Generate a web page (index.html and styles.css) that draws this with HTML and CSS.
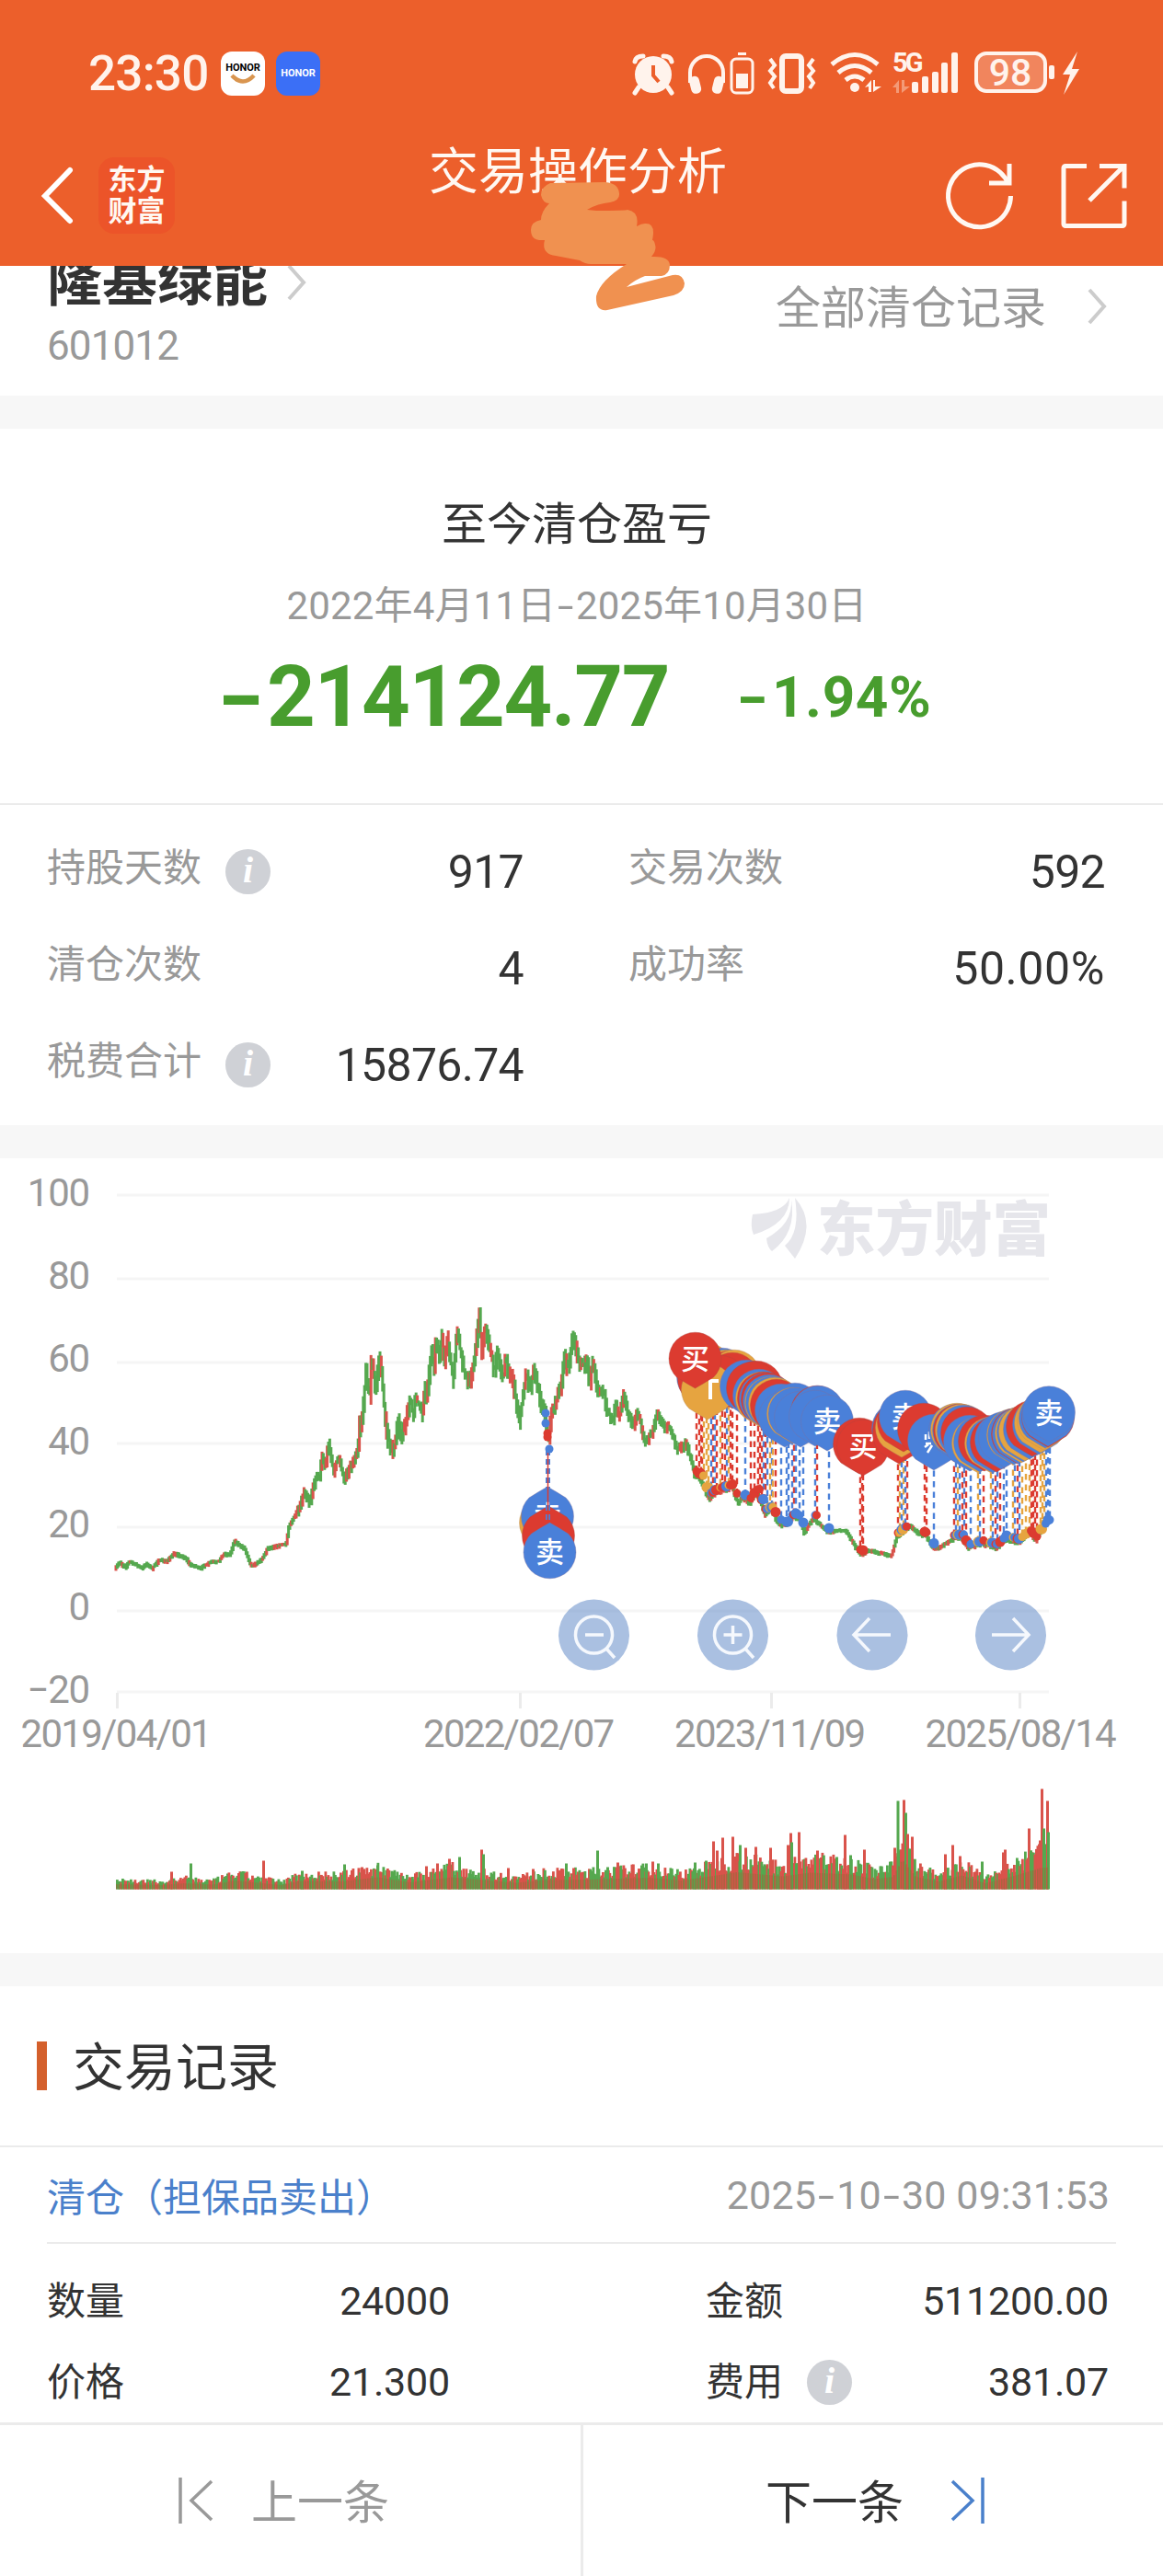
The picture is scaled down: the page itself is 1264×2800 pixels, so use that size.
FILE: index.html
```html
<!DOCTYPE html>
<html lang="zh-CN">
<head>
    <meta charset="UTF-8">
    <meta name="viewport" content="width=device-width, initial-scale=1.0">
    <title>交易操作分析</title>
    <link rel="stylesheet" href="styles.css">
</head>
<body>

<header class="header">
    <div class="status-bar">
        <span class="time">23:30</span>
        <span class="app-badge white">HONOR
            <svg width="28" height="12" viewBox="0 0 28 12"><path d="M2 2Q14 15 26 2" fill="none" stroke="#d9954f" stroke-width="4.5"/></svg>
        </span>
        <span class="app-badge blue">HONOR</span>

        <svg class="status-icons" width="500" height="60" viewBox="680 50 500 60">
            <g fill="#fff3ec" stroke="none">
                <!-- alarm -->
                <circle cx="710" cy="81" r="20"/>
                <path d="M694 95l-4 6M726 95l4 6" stroke="#fff3ec" stroke-width="5" stroke-linecap="round"/>
                <path d="M690 67Q691 61 699 61M730 67Q729 61 721 61" fill="none" stroke="#fff3ec" stroke-width="5" stroke-linecap="round"/>
                <path d="M710 71v11l6 7" fill="none" stroke="#ec5f2b" stroke-width="4"/>
                <!-- headphones -->
                <path d="M750 90V79a18 18 0 0 1 36 0v11" fill="none" stroke="#fff3ec" stroke-width="4"/>
                <rect x="750" y="83" width="11" height="19" rx="5" transform="rotate(-14 755 92)"/>
                <rect x="775" y="83" width="11" height="19" rx="5" transform="rotate(14 781 92)"/>
                <rect x="802" y="57" width="9" height="3"/>
                <rect x="795" y="64" width="23" height="37" rx="5" fill="none" stroke="#fff3ec" stroke-width="3"/>
                <rect x="800" y="80" width="13" height="16"/>
                <!-- vibrate -->
                <rect x="850" y="61" width="21" height="38" rx="4" fill="none" stroke="#fff3ec" stroke-width="6"/>
                <path d="M837 64l5 7-5 6 5 6-5 7 4 6M884 64l-5 7 5 6-5 6 5 7-4 6" fill="none" stroke="#fff3ec" stroke-width="4"/>
                <!-- wifi -->
                <path d="M904 70Q929 49 954 70M911 79Q929 64 947 79M919 87Q929 79 939 87" fill="none" stroke="#fff3ec" stroke-width="5"/>
                <circle cx="929" cy="95" r="5"/>
                <path d="M940 95l7-8v13h-3v-6zM949 100V87h2v7h7z"/>
                <!-- mobile signal -->
                <path d="M970 95l7-8v14h-3v-6zM980 101V87h3v7h6z" opacity=".4"/>
                <rect x="991" y="89" width="7" height="12" rx="2"/>
                <rect x="1002" y="83" width="7" height="18" rx="2"/>
                <rect x="1013" y="78" width="7" height="23" rx="2"/>
                <rect x="1023" y="68" width="7" height="33" rx="2"/>
                <rect x="1034" y="57" width="7" height="44" rx="2"/>
                <!-- battery -->
                <rect x="1061" y="58" width="75" height="41" rx="11" fill="#f1855d" stroke="#fff3ec" stroke-width="4"/>
                <rect x="1140" y="71" width="6" height="15" rx="2"/>
                <path d="M1171 56l-16 25h8l-7 22 17-28h-8z"/>
                <text class="net" x="970" y="78">5G</text>
                <text class="charge" x="1098" y="93" text-anchor="middle">98</text>
            </g>
        </svg>
    </div>

    <div class="nav">
        <svg class="back" width="36" height="64" viewBox="0 0 36 64"><path d="M32 4L5 32l27 27" fill="none" stroke="#fff" stroke-width="6" stroke-linecap="round"/></svg>
        <div class="brand"><span>东方</span><span>财富</span></div>
        <h1>交易操作分析</h1>
        <svg class="tools" width="200" height="80" viewBox="1026 172 200 80" fill="none" stroke="#fff8f2" stroke-width="5">
            <path d="M1098.500 212A34 34 0 1 1 1096 199"/>
            <path d="M1075 198h22v-21"/>
            <path d="M1181 179.500h-23a2 2 0 0 0-2 2v61a2 2 0 0 0 2 2h62a2 2 0 0 0 2-2v-25M1195 179.500h27v24M1221 180l-37 37"/>
        </svg>
    </div>

    <!-- doodle over the title -->
    <svg class="doodle" width="180" height="150" viewBox="570 195 180 150">
        <path fill="#f09150" d="M598 199Q588 203 588 212Q590 221 597 221Q588 230 588 239Q577 241 577 250Q577 260 586 261H592Q588 276 604 278L630 283Q636 287 642 287H681Q652 305 648 322Q647 339 660 337L732 321Q744 317 744 308Q742 297 731 299L681 312Q690 304 701 300H719Q728 298 728 288Q727 278 708 279Q714 272 712 266Q711 261 709 261Q713 242 701 243Q697 243 692 246Q695 230 682 228Q680 229 648 229L638 228Q650 221 663 220Q674 218 673 210Q672 199 658 198Z"/>
    </svg>
</header>

<section class="stock">
    <div class="stock-info">
        <div class="stock-name">隆基绿能 <svg width="22" height="40" viewBox="0 0 22 40"><path d="M2 2l16 18L2 38" fill="none" stroke="#ccc" stroke-width="4"/></svg></div>
        <div class="stock-code">601012</div>
    </div>
    <div class="all-records"><span>全部清仓记录</span>
        <svg width="22" height="40" viewBox="0 0 22 40"><path d="M2 2l16 18L2 38" fill="none" stroke="#ccc" stroke-width="4"/></svg>
    </div>
</section>

<section class="summary">
    <h2>至今清仓盈亏</h2>
    <p class="period">2022年4月11日<i class="dash">-</i>2025年10月30日</p>
    <div class="profit">
        <span class="amount"><i class="dash">-</i>214124.77</span>
        <span class="percent"><i class="dash">-</i>1.94%</span>
    </div>
    <div class="stats">
        <div class="stat"><span>持股天数</span><i class="info">i</i><b>917</b></div>
        <div class="stat"><span>交易次数</span><b>592</b></div>
        <div class="stat"><span>清仓次数</span><b>4</b></div>
        <div class="stat"><span>成功率</span><b class="rate">50.00%</b></div>
        <div class="stat"><span>税费合计</span><i class="info">i</i><b>15876.74</b></div>
    </div>
</section>

<section class="chart">
    <svg id="chart" width="1264" height="864" viewBox="0 1259 1264 864">
        <g id="grid"></g>
        <g class="watermark">
            <path d="M858 1302Q852 1318 818 1320Q815 1333 819 1342Q858 1330 858 1302Z"/>
            <path d="M860 1304Q862 1330 833 1346Q834 1356 839 1360Q866 1340 860 1304Z"/>
            <path d="M864 1302Q870 1340 853 1354L864 1368Q889 1330 864 1302Z"/>
            <text x="888" y="1359">东方财富</text>
        </g>
        <g id="price"></g>
        <g id="stems"></g>
        <g id="pins"></g>
        <g id="volume"></g>
        <g class="chart-btn">
            <circle cx="645.500" cy="1777" r="38.500"/><circle cx="796.500" cy="1777" r="38.500"/>
            <circle cx="948" cy="1777" r="38.500"/><circle cx="1098.500" cy="1777" r="38.500"/>
            <g fill="none" stroke="#f5f8fd" stroke-width="3.500">
                <circle cx="645.500" cy="1777" r="20"/><path d="M636 1777h20M659 1792l9 10"/>
                <circle cx="796.500" cy="1777" r="20"/><path d="M786.500 1777h20M796.500 1767v20M810 1792l9 10"/>
                <path d="M968 1777h-40M945 1759l-17 18 17 18"/>
                <path d="M1078 1777h40M1101 1759l17 18-17 18"/>
            </g>
        </g>
    </svg>
</section>

<section class="records">
    <h3><span>交易记录</span></h3>
    <div class="record-head">
        <span class="type">清仓（担保品卖出）</span>
        <span class="date">2025<i class="dash">-</i>10<i class="dash">-</i>30 09:31:53</span>
    </div>
    <div class="record-body">
        <div class="cell left"><span>数量</span><b>24000</b></div>
        <div class="cell"><span>金额</span><b>511200.00</b></div>
        <div class="cell left"><span>价格</span><b>21.300</b></div>
        <div class="cell"><span>费用</span><i class="info">i</i><b>381.07</b></div>
    </div>
</section>

<footer class="pager">
    <div class="prev">
        <svg width="42" height="52" viewBox="0 0 42 52"><path d="M3 1v50M37 5L15 26l22 21" fill="none" stroke="#999" stroke-width="3.500"/></svg>
        <span>上一条</span>
    </div>
    <div class="next">
        <span>下一条</span>
        <svg width="42" height="52" viewBox="0 0 42 52"><path d="M38 1v50M5 5l22 21L5 47" fill="none" stroke="#4a80cb" stroke-width="3.500"/></svg>
    </div>
</footer>

<script src="chart.js"></script>
</body>
</html>
```

FILE: styles.css
```css
body {
    margin: 0;
    width: 1264px;
    height: 2800px;
    overflow: hidden;
    background-color: #fff;
    color: #333;
    font-family: Roboto, "Noto Sans CJK SC", sans-serif;
    font-size: 42px;
}

h1, h2, h3, p {
    margin: 0;
    font-weight: 400;
}

b, i {
    font-weight: 400;
    font-style: normal;
}

svg {
    display: block;
    flex: none;
}

/* the hyphen is drawn wider than the font's own */
.dash {
    display: inline-block;
    transform: scaleX(1.5);
    margin: 0 0.12em;
}

/* Header */
.header {
    position: relative;
    z-index: 1;
    height: 289px;
    background-color: #ec5f2b;
    color: #fff8f2;
}

.status-bar {
    display: flex;
    align-items: center;
    height: 60px;
    padding: 50px 84px 0 96px;
}

.time {
    width: 144px;
    font-size: 53px;
    font-weight: 500;
    letter-spacing: -0.8px;
    color: #fff3ec;
}

.app-badge {
    display: flex;
    flex-direction: column;
    align-items: center;
    justify-content: center;
    width: 48px;
    height: 48px;
    margin-right: 12px;
    border-radius: 12px;
    font-size: 11px;
    font-weight: 700;
    line-height: 12px;
}

.white {
    background-color: #fff;
    color: #000;
}

.blue {
    background-color: #3b6ff6;
    color: #fff;
}

.status-icons {
    margin-left: auto;
}

.net {
    font-size: 29px;
    font-weight: 700;
    letter-spacing: -3px;
}

.charge {
    font-size: 41px;
    font-weight: 500;
}

.nav {
    display: flex;
    align-items: center;
    height: 178px;
    padding: 27px 38px 0 44px;
    box-sizing: border-box;
}

.brand {
    display: flex;
    flex-direction: column;
    justify-content: center;
    width: 83px;
    height: 83px;
    margin-left: 27px;
    border-radius: 17px;
    background-color: #ec5429;
    font-size: 31px;
    font-weight: 700;
    line-height: 34px;
    text-align: center;
}

.nav h1 {
    width: 324px;
    margin-left: 276px;
    padding-bottom: 50px;
    font-size: 54px;
    line-height: 60px;
    white-space: nowrap;
}

.tools {
    margin-left: auto;
}

.doodle {
    position: absolute;
    left: 570px;
    top: 195px;
}

/* Stock title row, partly scrolled under the header */
.stock {
    display: flex;
    justify-content: space-between;
    height: 141px;
    padding: 0 60px 0 51px;
}

.stock-name {
    display: flex;
    align-items: center;
    margin-top: -18px;
    height: 72px;
    font-size: 60px;
    font-weight: 700;
    line-height: 72px;
}

.stock-name svg {
    margin-left: 21px;
}

.stock-code {
    margin-top: 7px;
    font-size: 44px;
    line-height: 52px;
    letter-spacing: -0.9px;
    color: #999;
}

.all-records {
    display: flex;
    align-items: center;
    height: 88px;
    font-size: 49px;
    color: #999;
}

.all-records span {
    margin-top: -6px;
}

.all-records svg {
    margin-left: 45px;
}

/* Profit summary */
.summary {
    border-top: 36px solid #f7f7f7;
    border-bottom: 36px solid #f7f7f7;
    height: 757px;
}

.summary h2 {
    padding-top: 75px;
    padding-right: 10px;
    font-size: 49px;
    line-height: 60px;
    text-align: center;
}

.period {
    margin-top: 28px;
    padding-right: 10px;
    line-height: 60px;
    letter-spacing: 0.15px;
    color: #999;
    text-align: center;
}

.profit {
    display: flex;
    align-items: center;
    height: 184px;
    padding: 0 0 47px 233px;
    box-sizing: border-box;
    color: #489d2e;
    font-weight: 700;
}

.profit .dash {
    font-weight: 700;
}

.amount {
    width: 566px;
    font-size: 92px;
    letter-spacing: -1.3px;
}

.percent {
    font-size: 62px;
    letter-spacing: 0.6px;
}

.stats {
    display: grid;
    grid-template-columns: 518px 518px;
    grid-auto-rows: 105px;
    column-gap: 114px;
    padding: 20px 0 0 51px;
    border-top: 2px solid #ebebeb;
}

.stat {
    display: flex;
    align-items: center;
    color: #999;
}

.stat span {
    margin-top: -16px;
}

.stat b {
    margin-left: auto;
    font-size: 50px;
    letter-spacing: -0.7px;
    color: #333;
}

.stat .rate {
    letter-spacing: 0.6px;
}

.info {
    width: 49px;
    height: 49px;
    margin-left: 26px;
    border-radius: 50%;
    background-color: #cfd1d6;
    color: #fff;
    font: italic bold 40px/46px "Liberation Serif", serif;
    text-align: center;
}

/* Chart */
.chart {
    height: 864px;
    border-bottom: 36px solid #f7f7f7;
}

.axis {
    font-size: 42px;
    fill: #999;
    letter-spacing: -1.2px;
}

.watermark {
    fill: #e6e6eb;
    font-size: 63.5px;
    font-weight: 900;
}

.chart-btn {
    fill: rgba(120, 155, 207, 0.63);
}

.pin-text {
    fill: #fff;
    font-size: 31px;
    font-weight: 500;
    text-anchor: middle;
}

/* Records */
.records h3 {
    display: flex;
    align-items: center;
    height: 175px;
    padding-left: 40px;
    box-sizing: border-box;
    border-bottom: 2px solid #ebebeb;
    font-size: 56px;
}

.records h3 span {
    margin-top: -7px;
}

.records h3::before {
    content: "";
    width: 11px;
    height: 53px;
    margin-right: 28px;
    background-color: #d4602c;
}

.record-head {
    display: flex;
    align-items: center;
    justify-content: space-between;
    height: 103px;
    margin: 0 51px;
    padding-right: 7px;
    border-bottom: 2px solid #ebebeb;
}

.type {
    color: #4a80cb;
}

.date {
    color: #999;
    font-size: 43px;
    letter-spacing: 0.1px;
}

.record-body {
    display: grid;
    grid-template-columns: 438px 438px;
    column-gap: 278px;
    grid-auto-rows: 88px;
    padding: 18px 0 0 51px;
    height: 176px;
}

.cell {
    display: flex;
    align-items: center;
}

.cell span {
    margin-top: -7px;
}

.cell b {
    margin-left: auto;
    font-size: 43px;
    letter-spacing: -0.2px;
}

/* Bottom pager */
.pager {
    display: flex;
    height: 168px;
    border-top: 3px solid #ebebeb;
    background-color: #fff;
    font-size: 50px;
}

.prev, .next {
    display: flex;
    align-items: center;
    box-sizing: border-box;
    padding-bottom: 4px;
}

.pager span {
    margin-top: -5px;
}

.prev {
    width: 634px;
    padding-left: 193px;
    gap: 38px;
    border-right: 3px solid #ebebeb;
    color: #999;
}

.next {
    padding-left: 198px;
    gap: 48px;
}
```

FILE: chart.js
```js
const RED = '#dc3b30', BLUE = '#4a80d9', ORANGE = '#e6a440';
const UP = '#d9534b', DOWN = '#55a84f';

// small seeded generator so the chart is the same on every load
let seed = 7;
function rnd() {
    seed = (seed * 16807) % 2147483647;
    return seed / 2147483647;
}

function interpolate(points, x) {
    let i = 1;
    while (i < points.length - 1 && points[i][0] < x) i++;
    const [x0, y0] = points[i - 1], [x1, y1] = points[i];
    return y0 + (y1 - y0) * Math.min(1, (x - x0) / (x1 - x0));
}

// Axis
const rows = [[100, 1299], [80, 1390], [60, 1481], [40, 1569], [20, 1660], [0, 1751], [-20, 1839]];
let grid = '';
rows.forEach(([label, y], i) => {
    grid += `<rect x="127" y="${y - 1.5}" width="1013" height="3" fill="#f5f5f5"/>`;
    const text = label < 0 ? `<tspan>−</tspan>20` : label;
    grid += `<text class="axis" x="97" y="${1311 + i * 90}" text-anchor="end">${text}</text>`;
});
[[127, 126, '2019/04/01'], [565, 563.5, '2022/02/07'], [838, 836.5, '2023/11/09'], [1108, 1109, '2025/08/14']].forEach(([x, cx, date]) => {
    grid += `<rect x="${x - 1}" y="1840" width="3" height="17" fill="#ebebeb"/>`;
    grid += `<text class="axis" x="${cx}" y="1899" text-anchor="middle" textLength="207">${date}</text>`;
});
document.getElementById('grid').innerHTML = grid;

// Price
const price = [
    [126, 1704], [131, 1698], [137, 1704], [142, 1697], [155, 1704], [161, 1700], [166, 1705], [175, 1695], [183, 1697],
    [190, 1688], [204, 1694], [208, 1701], [220, 1704], [231, 1697], [239, 1697], [245, 1689], [251, 1690], [256, 1675],
    [267, 1683], [274, 1703], [286, 1695], [292, 1683], [312, 1678], [315, 1660], [324, 1643], [332, 1620], [338, 1632],
    [345, 1603], [348, 1610], [351, 1582], [355, 1593], [358, 1567], [364, 1600], [369, 1582], [375, 1607], [384, 1590],
    [390, 1578], [392, 1545], [394, 1550], [399, 1490], [403, 1520], [405, 1470], [409, 1510], [414, 1470], [418, 1520],
    [422, 1560], [429, 1576], [434, 1542], [437, 1565], [443, 1540], [447, 1520], [450, 1536], [453, 1520], [461, 1536],
    [463, 1503], [465, 1520], [470, 1466], [473, 1488], [475, 1453], [479, 1470], [482, 1450], [484, 1488], [487, 1452],
    [494, 1499], [498, 1442], [501, 1465], [506, 1493], [513, 1500], [518, 1466], [522, 1425], [525, 1470], [528, 1442],
    [535, 1470], [538, 1490], [542, 1470], [548, 1500], [551, 1473], [554, 1498], [557, 1490], [566, 1543], [573, 1492],
    [577, 1511], [582, 1487], [588, 1520], [594, 1537], [597, 1568], [600, 1537], [606, 1523], [612, 1497], [614, 1470],
    [618, 1488], [624, 1450], [631, 1480], [635, 1485], [639, 1473], [642, 1501], [646, 1478], [650, 1511], [658, 1513],
    [660, 1531], [668, 1545], [670, 1522], [674, 1541], [679, 1515], [684, 1537], [690, 1548], [694, 1533], [702, 1568],
    [710, 1557], [716, 1535], [722, 1550], [729, 1550], [737, 1575], [747, 1568], [753, 1590], [757, 1603], [763, 1608],
    [771, 1628], [779, 1622], [797, 1617], [804, 1635], [807, 1627], [817, 1633], [823, 1620], [833, 1647], [839, 1640],
    [847, 1655], [855, 1658], [863, 1648], [871, 1652], [875, 1666], [885, 1650], [901, 1665], [920, 1663], [936, 1690],
    [946, 1685], [970, 1691], [976, 1670], [990, 1658], [1000, 1667], [1008, 1670], [1016, 1683], [1024, 1681],
    [1038, 1672], [1046, 1672], [1053, 1683], [1068, 1678], [1084, 1683], [1094, 1673], [1108, 1677], [1120, 1667],
    [1127, 1674], [1133, 1662], [1140, 1655]
];
let candles = '';
for (let x = 126; x < 1140; x += 1.4) {
    const y0 = interpolate(price, x), y1 = interpolate(price, x + 1.4);
    const size = x > 390 && x < 660 ? 13 : x > 320 && x < 760 ? 8 : x > 320 && x < 850 ? 4 : 2.6;
    const top = Math.min(y0, y1) - rnd() * size * 0.6 - 1, bottom = Math.max(y0, y1) + rnd() * size + 1;
    const up = rnd() < (y1 < y0 ? 0.42 : 0.15);
    candles += `<path d="M${x.toFixed(1)} ${top.toFixed(1)}V${bottom.toFixed(1)}" stroke="${up ? UP : DOWN}" stroke-width="3"/>`;
}
document.getElementById('price').innerHTML = candles;

// Buy / sell pins: x, y of the head, colour, label
const pins = [
    [767, 1488, ORANGE], [764, 1497, BLUE], [765, 1499, RED], [785, 1494, BLUE], [789, 1496, ORANGE], [793, 1497, RED], [798, 1496, ORANGE],
    [796, 1499, RED], [783, 1502, RED], [769, 1511, ORANGE, 'Γ'],
    [811, 1507, BLUE], [822, 1508, RED], [818, 1509, RED], [825, 1517, BLUE], [828, 1520, ORANGE], [830, 1520, RED],
    [832, 1521, BLUE], [834, 1521, RED], [836, 1523, BLUE], [838, 1525, ORANGE], [839, 1525, BLUE], [842, 1526, ORANGE], [844, 1528, RED],
    [849, 1533, BLUE], [864, 1532, BLUE], [853, 1541, BLUE], [862, 1537, ORANGE], [863.5, 1537, BLUE],
    [870, 1541, BLUE], [888, 1535, RED], [889, 1535, BLUE], [886, 1540, BLUE], [899, 1545, BLUE, '卖'],
    [934, 1570, RED], [938, 1572, RED, '买'],
    [976, 1553, BLUE], [977, 1554, RED], [979, 1556, ORANGE], [980, 1556, BLUE], [977, 1559, RED], [980, 1552, ORANGE], [982, 1546, RED], [984, 1540, BLUE, '卖'],
    [1004, 1554, RED], [1015, 1566, BLUE],
    [1038, 1555, BLUE], [1040, 1554, ORANGE], [1042, 1555, BLUE], [1043, 1555, RED], [1045, 1555, ORANGE], [1047, 1556, BLUE],
    [1051, 1558, RED], [1054, 1567, BLUE], [1063, 1569, ORANGE], [1065, 1568, BLUE], [1070, 1567, RED], [1080, 1568, BLUE],
    [1077, 1569, ORANGE], [1079, 1569, BLUE], [1083, 1568, RED], [1088, 1565, BLUE], [1092, 1563, BLUE],
    [1101, 1560, ORANGE], [1102, 1560, BLUE], [1106, 1559, RED], [1107, 1559, BLUE], [1110, 1558, ORANGE], [1112, 1557, BLUE],
    [1114, 1556, ORANGE], [1119, 1554, BLUE], [1122, 1551, RED], [1129, 1549, BLUE], [1131, 1547, ORANGE], [1134, 1544, ORANGE],
    [1136, 1542, BLUE], [1139, 1541, RED], [1139, 1540, BLUE], [1140, 1535.5, BLUE, '卖']
];
function drawPin(x, y, color, label, flip) {
    const s = flip ? -1 : 1;
    const rim = color === BLUE ? '#7d6f9c' : color === RED ? '#b0433f' : '#b58a5a';
    let out = `<path d="M${x - 20} ${y + s * 20}A28.500 28.500 0 1 ${flip ? 0 : 1} ${x + 20} ${y + s * 20}Q${x + 9} ${y + s * 27} ${x} ${y + s * 32}Q${x - 9} ${y + s * 27} ${x - 20} ${y + s * 20}Z" fill="${color}" stroke="${rim}" stroke-width=".4"/>`;
    if (label === 'Γ') out += `<path d="M${x + 3} ${y + 10}v-20h9" fill="none" stroke="#fff" stroke-width="4"/>`;
    else if (label) out += `<text class="pin-text" x="${x}" y="${y + 11}">${label}</text>`;
    return out;
}
let heads = '';
pins.forEach(([x, y, color, label]) => {
    heads += drawPin(x, y, color, label);
    // clipped label of the pin that sits under the next cluster
    if (x === 1015) heads += '<path d="M1006 1559v6M1010 1556v8M1005 1573l4-3M1008 1579l5-8M1012 1569h-6" fill="none" stroke="#fff" stroke-width="2.500"/>';
});
heads += drawPin(755.500, 1477, RED, '买');
heads += drawPin(593, 1655, ORANGE, '', true) + drawPin(595, 1648, BLUE, '卖', true);
heads += drawPin(596, 1669, RED, '', true) + drawPin(597.500, 1687, BLUE, '卖', true);
heads += `<path d="M595.500 1576V1655" stroke="${BLUE}" stroke-width="5" stroke-dasharray="6 4"/><path d="M595.500 1576V1655" stroke="${RED}" stroke-width="1.500"/>`;
[[593, 1536, BLUE], [593, 1547, BLUE], [595, 1558, RED], [595, 1562, RED], [597, 1575, BLUE]].forEach(([x, y, c]) => heads += `<circle cx="${x}" cy="${y}" r="4.500" fill="${c}"/>`);
document.getElementById('pins').innerHTML = heads;

// Stems: x, start y, colours of the lines that share it
const stems = [
    [757, 1509, [RED]], [760, 1530, [RED, RED]], [763, 1535, [RED, ORANGE]], [768, 1540, [ORANGE, ORANGE]], [773, 1538, [BLUE, RED]], [777, 1536, [BLUE, RED]],
    [783, 1535, [ORANGE, RED]], [788, 1534, [RED, BLUE]], [792, 1534, [ORANGE, RED]], [796, 1534, [RED]], [801, 1534, [RED]], [810, 1538, [BLUE]],
    [816, 1540, [RED]], [820, 1543, [RED]], [824, 1546, [RED, RED]], [828, 1548, [RED, BLUE]], [832, 1552, [RED, BLUE]], [837, 1555, [ORANGE, BLUE]], [840, 1560, [ORANGE]], [843, 1563, [RED]],
    [849, 1570, [BLUE]], [855, 1572, [BLUE, BLUE]], [861, 1572, [BLUE, RED]], [865, 1570, [BLUE]], [869, 1572, [BLUE]], [873, 1572, [BLUE]],
    [886, 1570, [BLUE, RED]], [901, 1577, [BLUE]], [935, 1602, [RED, RED]], [938, 1602, [RED]],
    [976, 1588, [RED, ORANGE]], [980, 1588, [BLUE, ORANGE]], [984, 1578, [BLUE, RED]], [1005, 1590, [RED]], [1007, 1590, [RED]], [1015, 1598, [BLUE]],
    [1037, 1590, [RED, BLUE]], [1041, 1594, [ORANGE, BLUE]], [1046, 1596, [RED, BLUE]], [1050, 1598, [RED]], [1055, 1600, [BLUE]], [1063, 1600, [ORANGE, BLUE]], [1069, 1600, [RED]],
    [1077, 1600, [ORANGE, BLUE]], [1082, 1600, [RED, BLUE]], [1087, 1600, [RED]], [1091, 1598, [BLUE]], [1094, 1597, [BLUE]], [1101, 1594, [ORANGE, BLUE]], [1106, 1592, [RED, BLUE]],
    [1111, 1590, [ORANGE]], [1115, 1590, [ORANGE]], [1119, 1588, [ORANGE, RED]], [1123, 1585, [RED, RED]], [1127, 1583, [RED]], [1131, 1580, [ORANGE, ORANGE]], [1135, 1576, [ORANGE, BLUE]], [1139, 1572, [BLUE]], [1141, 1570, [BLUE]]
];
let lines = '';
let dots = '';
stems.forEach(([x, y, colors], n) => {
    const end = interpolate(price, Math.min(x, 1139)) - 6;
    colors.forEach((c, i) => {
        lines += `<path d="M${x + i * 2} ${y - 8}V${end}" stroke="${c}" stroke-width="2.400" stroke-dasharray="6.500 5" stroke-dashoffset="${i * 5 + (n % 2) * 3}"/>`;
        dots += `<circle cx="${x + i * 1.5}" cy="${end + 2}" r="${4.500 + (n % 2)}" fill="${c}"/>`;
    });
});
document.getElementById('stems').innerHTML = lines + dots;

// Volume: envelope of ordinary days, then single high days
const envelope = [
    [126, 11], [175, 9], [200, 13], [230, 10], [255, 19], [285, 13], [305, 9], [325, 18], [370, 17], [410, 26], [445, 15], [490, 26], [530, 19],
    [560, 14], [590, 20], [640, 21], [705, 25], [740, 19], [785, 32], [800, 37], [850, 28], [880, 36], [925, 32], [950, 22], [970, 27], [980, 64],
    [995, 27], [1020, 17], [1045, 30], [1070, 13], [1100, 28], [1130, 46], [1140, 48]
];
const spikes = [
    [185, 19, UP], [206, 28, DOWN], [285, 31, UP], [327, 20, DOWN], [373, 27, DOWN], [392, 24, UP], [409, 26, DOWN], [462, 25, UP], [474, 28, UP], [487, 33, UP], [498, 35, DOWN],
    [522, 43, UP], [524, 38, DOWN], [551, 23, UP], [578, 22, UP], [614, 28, DOWN], [622, 23, UP], [648, 42, DOWN], [659, 24, DOWN], [670, 29, UP], [701, 28, DOWN], [708, 30, UP], [714, 28, DOWN],
    [754, 29, DOWN], [766, 31, DOWN], [774, 52, UP], [778, 42, UP], [784, 56, UP], [795, 57, UP], [803, 48, DOWN], [809, 45, UP], [820, 46, UP], [836, 45, UP], [855, 48, UP],
    [858, 61, UP], [859, 51, DOWN], [867, 62, UP], [887, 42, UP], [908, 35, DOWN], [917, 59, UP], [923, 37, DOWN], [938, 43, UP], [971, 45, UP], [974.500, 96, DOWN], [981, 97, UP],
    [983, 83, DOWN], [985, 60, UP], [987, 44, DOWN], [990, 57, UP], [1026, 38, UP], [1034, 48, UP], [1042, 36, UP], [1066, 30, DOWN], [1089, 40, UP], [1091, 43, UP], [1117, 66, UP],
    [1119, 42, DOWN], [1127, 44, UP], [1129, 53, UP], [1131, 109, UP], [1133, 66, DOWN], [1137, 96, UP], [1138, 62, DOWN]
];
let volume = '';
function bar(x, h, color, width = 2.8) {
    volume += `<rect x="${x.toFixed(1)}" y="${(2053.500 - h).toFixed(1)}" width="${width}" height="${h.toFixed(1)}" fill="${color}"/>`;
}
for (let x = 126; x < 1138; x += 1.5) {
    bar(x, interpolate(envelope, x) * (0.55 + rnd() * 0.6), rnd() < 0.52 ? UP : DOWN);
}
spikes.forEach(([x, h, color]) => bar(x, h, color, 3));
// dense low bars blend into one brown tone
for (let x = 126; x < 1139; x += 2.6) {
    const h = interpolate(envelope, x) * 0.5;
    volume += `<rect x="${x.toFixed(1)}" y="${(2053.500 - h).toFixed(1)}" width="1.500" height="${h.toFixed(1)}" fill="#996b3c" opacity=".7"/>`;
}
document.getElementById('volume').innerHTML = volume;
```
